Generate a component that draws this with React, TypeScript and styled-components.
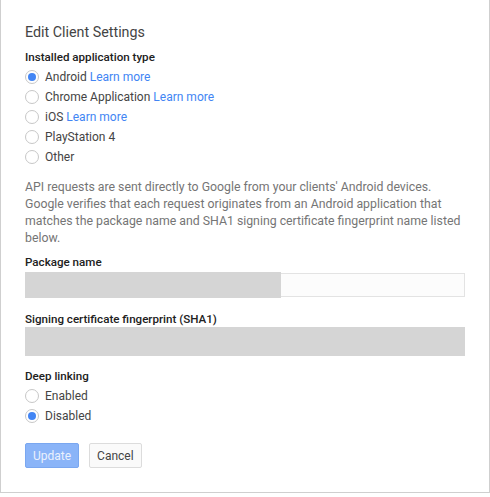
import React from "react";
import styled, { createGlobalStyle } from "styled-components";

const GlobalStyle = createGlobalStyle`
  html, body {
    margin: 0;
    padding: 0;
    background: #ffffff;
  }
  body {
    font-family: Roboto, "Liberation Sans", Arial, sans-serif;
    font-size: 12px;
    color: #444444;
  }
`;

const Card = styled.div`
  width: 488px;
  height: 492px;
  box-sizing: content-box;
  border: 1px solid #cfcfcf;
  border-top: none;
  box-shadow: 0 1px 2px rgba(0, 0, 0, 0.12);
  background: #ffffff;
`;

const Inner = styled.div`
  padding: 22px 24px 0 24px;
  display: flex;
  flex-direction: column;
`;

const Title = styled.h2`
  margin: 0;
  font-size: 14.3px;
  line-height: 20px;
  font-weight: 400;
  color: #444444;
`;

const Label = styled.div<{ $top: number }>`
  margin-top: ${(p) => p.$top}px;
  font-size: 11.6px;
  line-height: 16px;
  font-weight: 500;
  color: #212121;
`;

const RadioGroup = styled.div`
  display: flex;
  flex-direction: column;
  margin-top: 2px;
`;

const RadioRow = styled.label`
  display: flex;
  align-items: center;
  height: 20px;
  gap: 6px;
  font-size: 12px;
  color: #444444;
  cursor: pointer;
`;

const Circle = styled.span<{ $checked: boolean }>`
  width: 14px;
  height: 14px;
  box-sizing: border-box;
  border: 1px solid #c7c7c7;
  border-radius: 50%;
  display: flex;
  align-items: center;
  justify-content: center;
  flex-shrink: 0;
  background: #ffffff;
  &::after {
    content: "";
    width: 8px;
    height: 8px;
    border-radius: 50%;
    background: ${(p) => (p.$checked ? "#4285f4" : "transparent")};
  }
`;

const Link = styled.a`
  color: #4285f4;
  text-decoration: none;
`;

const Description = styled.p`
  margin: 12px 0 0 0;
  font-size: 12.3px;
  line-height: 17px;
  color: #757575;
  width: 440px;
`;

const FieldWrap = styled.div`
  position: relative;
  margin-top: 2px;
  width: 440px;
  height: 26px;
  display: flex;
  align-items: center;
`;

const TextInput = styled.input`
  box-sizing: border-box;
  width: 440px;
  height: 24px;
  border: 1px solid #e3e3e3;
  background: #fcfcfc;
  margin: 0;
  padding: 0 6px;
  outline: none;
`;

const Redaction = styled.div<{ $width: number; $height: number }>`
  position: absolute;
  left: 0;
  top: 0;
  width: ${(p) => p.$width}px;
  height: ${(p) => p.$height}px;
  background: #d5d5d5;
`;

const RedactedBlock = styled.div`
  width: 440px;
  height: 29px;
  background: #d5d5d5;
`;

const Actions = styled.div`
  display: flex;
  gap: 10px;
  margin-top: 17px;
`;

const Button = styled.button<{ $primary?: boolean }>`
  height: 25px;
  box-sizing: border-box;
  padding: 0 7px;
  font-family: Roboto, "Liberation Sans", Arial, sans-serif;
  font-size: 12px;
  border-radius: 2px;
  border: 1px solid ${(p) => (p.$primary ? "#7aa7f0" : "#dcdcdc")};
  background: ${(p) => (p.$primary ? "#8ab4f8" : "#fafafa")};
  color: ${(p) => (p.$primary ? "#eaf1fd" : "#444444")};
  cursor: pointer;
`;

type RadioProps = {
  label: string;
  checked?: boolean;
  learnMore?: boolean;
};

const Radio: React.FC<RadioProps> = ({ label, checked = false, learnMore }) => (
  <RadioRow>
    <Circle $checked={checked} />
    <span>
      {label}
      {learnMore && (
        <>
          {" "}
          <Link href="#">Learn more</Link>
        </>
      )}
    </span>
  </RadioRow>
);

const App: React.FC = () => {
  return (
    <>
      <GlobalStyle />
      <Card>
        <Inner>
          <Title>Edit Client Settings</Title>
          <Label $top={7}>Installed application type</Label>
          <RadioGroup>
            <Radio label="Android" checked learnMore />
            <Radio label="Chrome Application" learnMore />
            <Radio label="iOS" learnMore />
            <Radio label="PlayStation 4" />
            <Radio label="Other" />
          </RadioGroup>
          <Description>
            API requests are sent directly to Google from your clients' Android
            devices. Google verifies that each request originates from an
            Android application that matches the package name and SHA1 signing
            certificate fingerprint name listed below.
          </Description>
          <Label $top={7}>Package name</Label>
          <FieldWrap>
            <TextInput type="text" />
            <Redaction $width={256} $height={26} />
          </FieldWrap>
          <Label $top={13}>Signing certificate fingerprint (SHA1)</Label>
          <RedactedBlock />
          <Label $top={12}>Deep linking</Label>
          <RadioGroup>
            <Radio label="Enabled" />
            <Radio label="Disabled" checked />
          </RadioGroup>
          <Actions>
            <Button $primary disabled>
              Update
            </Button>
            <Button>Cancel</Button>
          </Actions>
        </Inner>
      </Card>
    </>
  );
};

export default App;
